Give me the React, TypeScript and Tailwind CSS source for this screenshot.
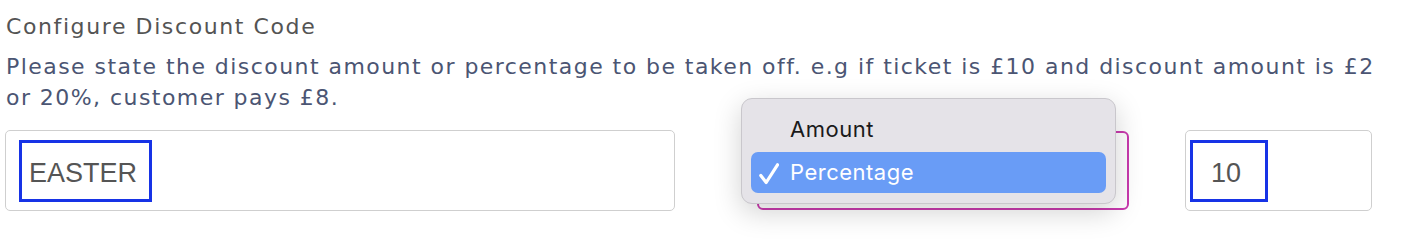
const pageFont = { fontFamily: '"DejaVu Sans", sans-serif' }
const inputFont = { fontFamily: '"Liberation Sans", sans-serif' }

const FocusBox = ({ children, className }: { children: React.ReactNode; className: string }) => (
  <span className={`flex h-[62px] items-center border-[3px] border-[#1733e6] ${className}`}>
    {children}
  </span>
)

const Tick = () => (
  <svg width="20" height="22" viewBox="0 0 20 22" className="mr-[11px] mt-[2px]" fill="none">
    <path
      d="M1.8 12.5 L7.2 19.5 L18.5 1.8"
      stroke="white"
      strokeWidth="3.2"
      strokeLinecap="round"
      strokeLinejoin="round"
    />
  </svg>
)

export default function App() {
  return (
    <div className="h-[251px] w-[1402px] bg-white pl-[6px] pt-[13px]">
      <h3
        className="text-[22px] leading-[28px] tracking-[1.6px] text-[#545454]"
        style={pageFont}
      >
        Configure Discount Code
      </h3>
      <p
        className="mt-[10px] text-[22px] leading-[31px] tracking-[1.45px] text-[#4b5573]"
        style={pageFont}
      >
        Please state the discount amount or percentage to be taken off. e.g if ticket is £10 and
        discount amount is £2
        <br />
        or 20%, customer pays £8.
      </p>

      <div className="mt-[17px] flex items-start">
        <div className="-ml-px flex h-[81px] w-[670px] items-start rounded-[5px] border border-[#cfcfcf] pl-[13px] pt-[9px]">
          <FocusBox className="w-[133px] pl-[7px] pt-[4px]">
            <span className="text-[27px] text-[#555]" style={inputFont}>
              EASTER
            </span>
          </FocusBox>
        </div>

        <div className="relative ml-[82px] mt-px h-[79px] w-[372px] rounded-[6px] border-2 border-[#c93aae]">
          <div
            className="absolute left-[-18px] top-[-35px] w-[375px] rounded-[11px] border border-[#c9c7cc] bg-[#e5e3e8] px-[9px] pb-[10px] pt-[10px] shadow-[0_8px_28px_rgba(0,0,0,0.18)]"
            style={{ fontFamily: "Inter, sans-serif" }}
          >
            <div className="flex h-[41px] items-center pl-[39px] text-[22px] tracking-[0.5px] text-[#1a1a1a]">
              Amount
            </div>
            <div className="mt-[2px] flex h-[41px] items-center rounded-[7px] bg-[#699cf6] pl-[8px] text-[22px] tracking-[0.5px] text-white">
              <Tick />
              Percentage
            </div>
          </div>
        </div>

        <div className="ml-[56px] flex h-[81px] w-[187px] items-start rounded-[5px] border border-[#cfcfcf] pl-[4px] pt-[9px]">
          <FocusBox className="w-[78px] pl-[18px] pt-[4px]">
            <span className="text-[27px] text-[#555]" style={inputFont}>
              10
            </span>
          </FocusBox>
        </div>
      </div>
    </div>
  )
}
